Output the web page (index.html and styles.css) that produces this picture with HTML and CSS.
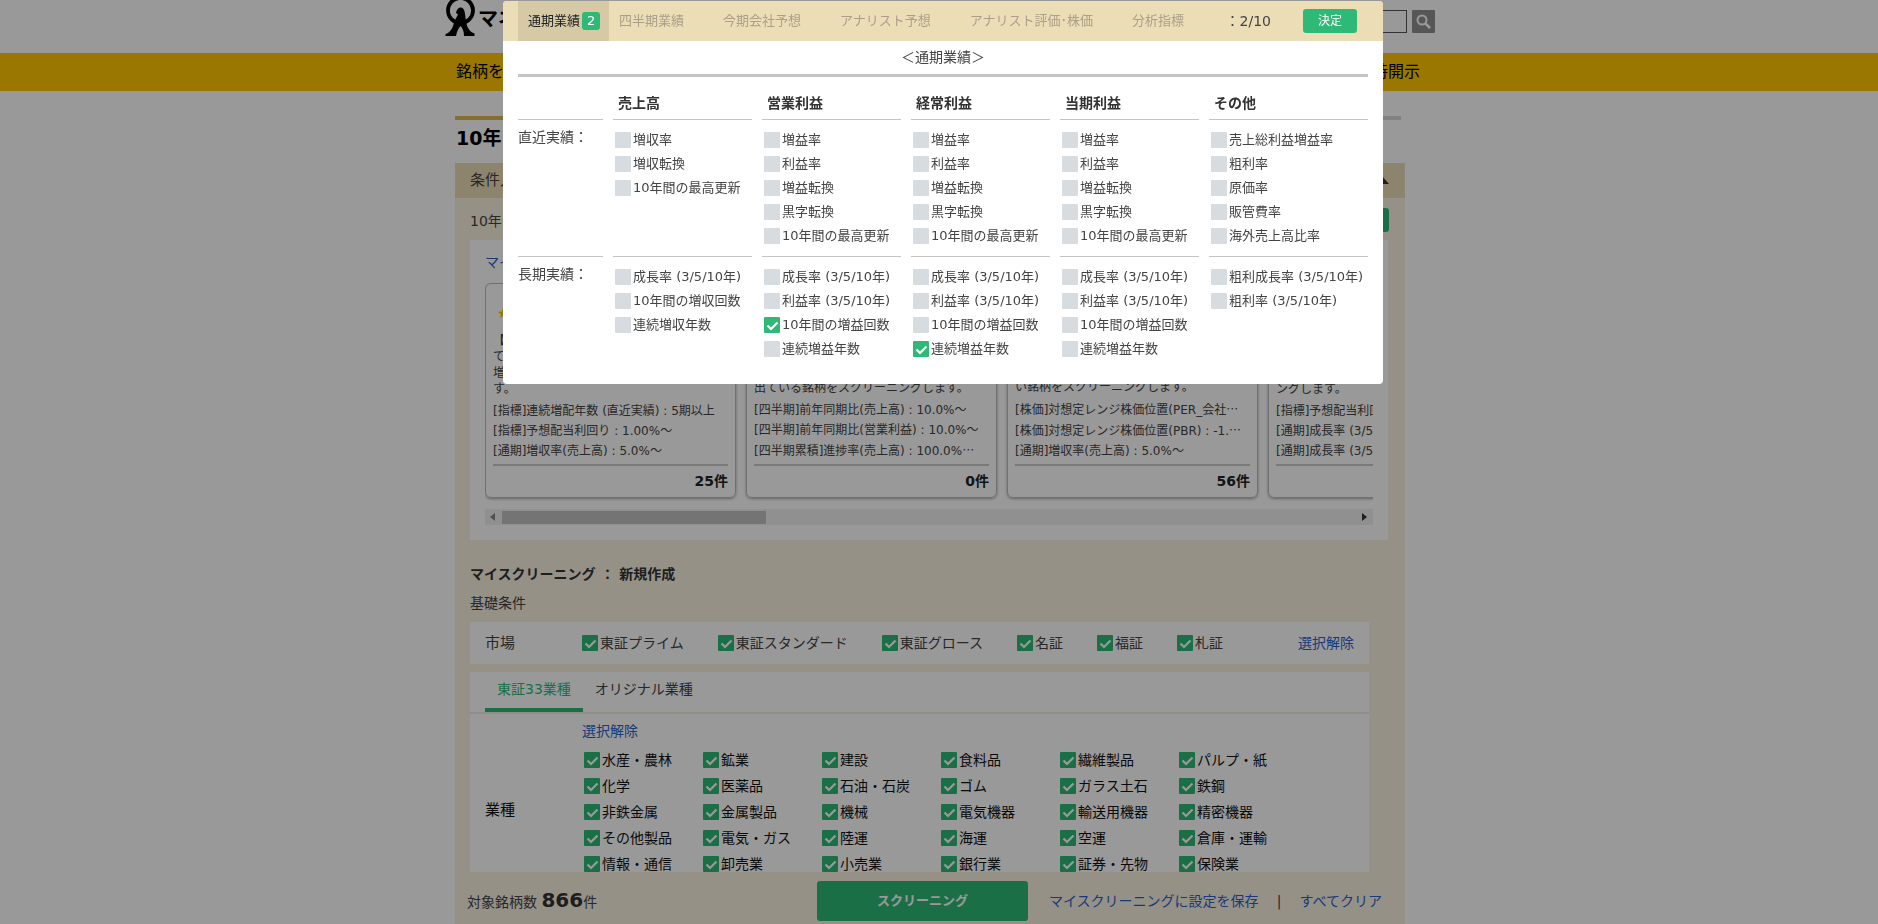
FILE: index.html
```html
<!DOCTYPE html>
<html lang="ja">
<head>
<meta charset="utf-8">
<title>10年スクリーニング</title>
<link rel="stylesheet" href="styles.css">
</head>
<body>
<div class="page">
  <header class="site-header">
    <div class="site-header-inner">
      <a class="logo" href="#">
        <svg class="logo-mark" width="32" height="37" viewBox="0 0 32 37" aria-hidden="true">
          <circle cx="16.500" cy="10.500" r="12.500" fill="none" stroke="#000" stroke-width="3.800"/>
          <path d="M12 13C12.500 9 15 7 17.500 7.500C20 8.500 20.500 11 21 14L22 21C23 28 26 32 30.500 33.500V36H20C20 31 18.500 28 16.500 26C14.500 28 13 31 12 36H1.500V34C6 33 9 28 10.500 21L14 14.500C13.500 14 13 13.500 12 13Z" fill="#000"/>
        </svg>
        <span>マネ</span>
      </a>
      <form class="search">
        <input class="search-box" type="text" aria-label="検索">
        <button class="search-button" type="button" aria-label="検索する">
          <svg width="15" height="15" viewBox="0 0 15 15"><circle cx="6" cy="6" r="4.500" fill="none" stroke="#fff" stroke-width="2"/><path d="M9.500 9.500L14 14" stroke="#fff" stroke-width="2.500"/></svg>
        </button>
      </form>
    </div>
  </header>
  <nav class="site-nav">
    <div class="site-nav-inner"><a href="#">銘柄を</a><a href="#">適時開示</a></div>
  </nav>

  <main class="main">
    <h1 class="page-title">10年</h1>
    <div class="panel-head"><span>条件入力</span><i class="triangle"></i></div>
    <div class="panel">
      <div class="intro"><span>10年ス</span><button class="guide" type="button" aria-label="使い方"></button></div>

      <section class="presets">
        <a class="link preset-link" href="#">マイ</a>
        <div class="cards">
          <article class="card">
            <div class="star">★</div>
            <p class="desc"><b class="lead">【</b><br>て<br>増<br>す。</p>
            <ul class="terms"><li>[指標]連続増配年数 (直近実績) : 5期以上</li><li>[指標]予想配当利回り : 1.00%～</li><li>[通期]増収率(売上高) : 5.0%～</li></ul>
            <p class="count">25件</p>
          </article>
          <article class="card">
            <p class="desc">出ている銘柄をスクリーニングします。</p>
            <ul class="terms"><li>[四半期]前年同期比(売上高) : 10.0%～</li><li>[四半期]前年同期比(営業利益) : 10.0%～</li><li>[四半期累積]進捗率(売上高) : 100.0%<span class="dots">…</span></li></ul>
            <p class="count">0件</p>
          </article>
          <article class="card">
            <p class="desc">い銘柄をスクリーニングします。</p>
            <ul class="terms"><li>[株価]対想定レンジ株価位置(PER_会社<span class="dots">…</span></li><li>[株価]対想定レンジ株価位置(PBR) : -1.<span class="dots">…</span></li><li>[通期]増収率(売上高) : 5.0%～</li></ul>
            <p class="count">56件</p>
          </article>
          <article class="card">
            <p class="desc">ングします。</p>
            <ul class="terms"><li>[指標]予想配当利回</li><li>[通期]成長率 (3/5</li><li>[通期]成長率 (3/5</li></ul>
            <p class="count"></p>
          </article>
        </div>
        <div class="scrollbar"><i class="arrow arrow-left"></i><div class="track"><div class="thumb"></div></div><i class="arrow arrow-right"></i></div>
      </section>

      <h2 class="section-title">マイスクリーニング ： 新規作成</h2>
      <h3 class="section-sub">基礎条件</h3>

      <section class="market">
        <span class="market-name">市場</span>
        <div class="market-items">
          <label class="check"><input type="checkbox" checked>東証プライム</label>
          <label class="check"><input type="checkbox" checked>東証スタンダード</label>
          <label class="check"><input type="checkbox" checked>東証グロース</label>
          <label class="check"><input type="checkbox" checked>名証</label>
          <label class="check"><input type="checkbox" checked>福証</label>
          <label class="check"><input type="checkbox" checked>札証</label>
        </div>
        <a class="link" href="#">選択解除</a>
      </section>

      <section class="industry">
        <div class="industry-tabs"><button class="industry-tab on" type="button">東証33業種</button><button class="industry-tab" type="button">オリジナル業種</button></div>
        <div class="industry-body">
          <span class="industry-name">業種</span>
          <div class="industry-main">
            <a class="link" href="#">選択解除</a>
            <div class="industry-grid">
              <label class="check"><input type="checkbox" checked>水産・農林</label>
              <label class="check"><input type="checkbox" checked>鉱業</label>
              <label class="check"><input type="checkbox" checked>建設</label>
              <label class="check"><input type="checkbox" checked>食料品</label>
              <label class="check"><input type="checkbox" checked>繊維製品</label>
              <label class="check"><input type="checkbox" checked>パルプ・紙</label>
              <label class="check"><input type="checkbox" checked>化学</label>
              <label class="check"><input type="checkbox" checked>医薬品</label>
              <label class="check"><input type="checkbox" checked>石油・石炭</label>
              <label class="check"><input type="checkbox" checked>ゴム</label>
              <label class="check"><input type="checkbox" checked>ガラス土石</label>
              <label class="check"><input type="checkbox" checked>鉄鋼</label>
              <label class="check"><input type="checkbox" checked>非鉄金属</label>
              <label class="check"><input type="checkbox" checked>金属製品</label>
              <label class="check"><input type="checkbox" checked>機械</label>
              <label class="check"><input type="checkbox" checked>電気機器</label>
              <label class="check"><input type="checkbox" checked>輸送用機器</label>
              <label class="check"><input type="checkbox" checked>精密機器</label>
              <label class="check"><input type="checkbox" checked>その他製品</label>
              <label class="check"><input type="checkbox" checked>電気・ガス</label>
              <label class="check"><input type="checkbox" checked>陸運</label>
              <label class="check"><input type="checkbox" checked>海運</label>
              <label class="check"><input type="checkbox" checked>空運</label>
              <label class="check"><input type="checkbox" checked>倉庫・運輸</label>
              <label class="check"><input type="checkbox" checked>情報・通信</label>
              <label class="check"><input type="checkbox" checked>卸売業</label>
              <label class="check"><input type="checkbox" checked>小売業</label>
              <label class="check"><input type="checkbox" checked>銀行業</label>
              <label class="check"><input type="checkbox" checked>証券・先物</label>
              <label class="check"><input type="checkbox" checked>保険業</label>
            </div>
          </div>
        </div>
      </section>
    </div>
    <footer class="action-bar">
      <p class="hits">対象銘柄数 <b>866</b>件</p>
      <button class="run" type="button">スクリーニング</button>
      <div class="action-links"><a class="link" href="#">マイスクリーニングに設定を保存</a><span>|</span><a class="link" href="#">すべてクリア</a></div>
    </footer>
  </main>
</div>

<div class="overlay"></div>

<section class="modal" role="dialog" aria-label="通期業績">
  <div class="modal-head">
    <div class="modal-tabs">
      <button class="modal-tab on" type="button">通期業績<span class="badge">2</span></button>
      <button class="modal-tab" type="button">四半期業績</button>
      <button class="modal-tab" type="button">今期会社予想</button>
      <button class="modal-tab" type="button">アナリスト予想</button>
      <button class="modal-tab" type="button">アナリスト評価･株価</button>
      <button class="modal-tab" type="button">分析指標</button>
    </div>
    <span class="picked">：2/10</span>
    <button class="decide" type="button">決定</button>
  </div>
  <div class="modal-body">
    <h2 class="modal-title">＜通期業績＞</h2>
    <div class="matrix">
      <div class="cell-head"></div>
      <div class="cell-head">売上高</div>
      <div class="cell-head">営業利益</div>
      <div class="cell-head">経常利益</div>
      <div class="cell-head">当期利益</div>
      <div class="cell-head">その他</div>

      <div class="cell-name">直近実績：</div>
      <div class="cell"><label class="check"><input type="checkbox">増収率</label><label class="check"><input type="checkbox">増収転換</label><label class="check"><input type="checkbox">10年間の最高更新</label></div>
      <div class="cell"><label class="check"><input type="checkbox">増益率</label><label class="check"><input type="checkbox">利益率</label><label class="check"><input type="checkbox">増益転換</label><label class="check"><input type="checkbox">黒字転換</label><label class="check"><input type="checkbox">10年間の最高更新</label></div>
      <div class="cell"><label class="check"><input type="checkbox">増益率</label><label class="check"><input type="checkbox">利益率</label><label class="check"><input type="checkbox">増益転換</label><label class="check"><input type="checkbox">黒字転換</label><label class="check"><input type="checkbox">10年間の最高更新</label></div>
      <div class="cell"><label class="check"><input type="checkbox">増益率</label><label class="check"><input type="checkbox">利益率</label><label class="check"><input type="checkbox">増益転換</label><label class="check"><input type="checkbox">黒字転換</label><label class="check"><input type="checkbox">10年間の最高更新</label></div>
      <div class="cell"><label class="check"><input type="checkbox">売上総利益増益率</label><label class="check"><input type="checkbox">粗利率</label><label class="check"><input type="checkbox">原価率</label><label class="check"><input type="checkbox">販管費率</label><label class="check"><input type="checkbox">海外売上高比率</label></div>

      <div class="cell-name ruled">長期実績：</div>
      <div class="cell ruled"><label class="check"><input type="checkbox">成長率 (3/5/10年)</label><label class="check"><input type="checkbox">10年間の増収回数</label><label class="check"><input type="checkbox">連続増収年数</label></div>
      <div class="cell ruled"><label class="check"><input type="checkbox">成長率 (3/5/10年)</label><label class="check"><input type="checkbox">利益率 (3/5/10年)</label><label class="check"><input type="checkbox" checked>10年間の増益回数</label><label class="check"><input type="checkbox">連続増益年数</label></div>
      <div class="cell ruled"><label class="check"><input type="checkbox">成長率 (3/5/10年)</label><label class="check"><input type="checkbox">利益率 (3/5/10年)</label><label class="check"><input type="checkbox">10年間の増益回数</label><label class="check"><input type="checkbox" checked>連続増益年数</label></div>
      <div class="cell ruled"><label class="check"><input type="checkbox">成長率 (3/5/10年)</label><label class="check"><input type="checkbox">利益率 (3/5/10年)</label><label class="check"><input type="checkbox">10年間の増益回数</label><label class="check"><input type="checkbox">連続増益年数</label></div>
      <div class="cell ruled"><label class="check"><input type="checkbox">粗利成長率 (3/5/10年)</label><label class="check"><input type="checkbox">粗利率 (3/5/10年)</label></div>
    </div>
  </div>
</section>
</body>
</html>
```

FILE: styles.css
```css
* { box-sizing: border-box; }
body {
  margin: 0;
  background: #fff;
  color: #444;
  font: 14px/20px "DejaVu Sans", "Noto Sans CJK JP", sans-serif;
}
h1, h2, h3, p, ul { margin: 0; padding: 0; font-weight: normal; }
ul { list-style: none; }
button, input { font: inherit; color: inherit; border: 0; padding: 0; margin: 0; }
button { background: none; }
a { color: inherit; text-decoration: none; }
.link { color: #2a5fcb; }

.page { height: 100vh; overflow: hidden; display: flex; flex-direction: column; }

/* site header */
.site-header { flex: none; height: 53px; }
.site-header-inner { width: 990px; margin: 0 auto; display: flex; justify-content: space-between; align-items: flex-start; }
.logo { display: flex; gap: 2px; color: #000; font-size: 20px; line-height: 38px; font-weight: bold; }
.search { display: flex; gap: 5px; padding-top: 10px; margin-right: -1px; }
.search-box { width: 180px; height: 23px; border: 1px solid #555; background: #fff; }
.search-button { width: 23px; height: 23px; background: #8f8f8f; display: flex; align-items: center; justify-content: center; border-radius: 1px; }
.site-nav { flex: none; height: 38px; background: #ffc600; color: #000; font-size: 16px; line-height: 38px; }
.site-nav-inner { width: 990px; margin: 0 auto; padding: 0 14px 0 12px; display: flex; justify-content: space-between; }

/* main column */
.main { flex: 1; min-height: 0; width: 950px; margin: 25px 0 0 calc(50% - 484px); display: flex; flex-direction: column; }
.page-title {
  flex: none;
  height: 47px;
  width: 946px;
  border-top: 4px solid;
  border-image: linear-gradient(90deg, #dfb94a 50%, #d9d9d9 50%) 1;
  border-width: 4px 0 0;
  padding-left: 1px;
  color: #000;
  font-size: 19px;
  line-height: 36px;
  font-weight: bold;
}
.panel-head { flex: none; height: 35px; padding: 0 16px 2px 15px; background: #ebdcb8; display: flex; justify-content: space-between; align-items: center; font-size: 15px; }
.triangle { border: 7px solid transparent; border-top: 0; border-bottom: 8px solid #333; }
.panel { flex: 1; min-height: 0; overflow: hidden; padding: 0 36px 0 15px; background: #f9f2e2; }
.intro { height: 42px; padding-top: 4px; margin-right: -20px; display: flex; justify-content: space-between; align-items: center; }
.guide { width: 80px; height: 24px; margin-bottom: 2px; background: #2eba76; border-radius: 3px; color: #fff; font-size: 13px; }

.presets { height: 300px; margin-right: -19px; padding: 12px 15px 0; background: #fff; }
.preset-link { display: block; height: 31px; }
.cards { display: flex; gap: 10px; overflow: hidden; height: 226px; }
.card { flex: none; width: 251px; height: 215px; padding: 7px 7px 0; border: 1px solid #bbb; border-radius: 6px; box-shadow: 0 1px 3px rgba(0, 0, 0, .35); display: flex; flex-direction: column; justify-content: flex-end; font-size: 12px; line-height: 16px; color: #444; }
.star { padding-left: 4px; margin-bottom: 12px; color: #ffc600; font-size: 14px; }
.terms { margin-top: 4px; line-height: 20px; white-space: nowrap; }
.dots { font-family: "Noto Sans CJK JP", sans-serif; }
.count { height: 33px; margin-top: 3px; border-top: 2px solid #ccc; text-align: right; font-size: 14px; line-height: 30px; font-weight: bold; color: #222; }
.scrollbar { height: 16px; background: #f1f1f1; display: flex; align-items: center; justify-content: space-between; padding: 0 6px 0 5px; }
.track { flex: 1; margin: 0 7px; }
.thumb { width: 31%; height: 13px; background: #c1c1c1; }
.arrow { border: 4px solid transparent; }
.arrow-left { border-left: 0; border-right: 5px solid #888; }
.arrow-right { border-right: 0; border-left: 5px solid #333; }

.section-title { margin-top: 24px; font-size: 14px; font-weight: bold; color: #333; }
.section-sub { margin: 9px 0; font-size: 14px; }

/* checkbox with its text */
.check { display: flex; align-items: center; gap: 2px; white-space: nowrap; }
.check input {
  appearance: none;
  flex: none;
  width: 16px;
  height: 16px;
  border-radius: 1px;
  background: #d6dcdf;
}
.check input:checked {
  background: #2eba76 url("data:image/svg+xml,%3Csvg xmlns='http://www.w3.org/2000/svg' viewBox='0 0 16 16'%3E%3Cpath d='M3.500 8.500L7 12L13.500 5.500' fill='none' stroke='white' stroke-width='2.200'/%3E%3C/svg%3E");
}

.market { height: 42px; padding: 0 15px; background: #fff; display: flex; align-items: center; font-size: 14px; }
.market-name { width: 97px; font-size: 15px; }
.market-items { flex: 1; display: flex; gap: 34px; }

.industry { margin-top: 8px; background: #fff; }
.industry-tabs { display: flex; height: 42px; padding: 0 15px; border-bottom: 2px solid #f0ebe0; }
.industry-tab { height: 40px; padding: 0 12px 2px; border-bottom: 4px solid transparent; }
.industry-tab.on { color: #2eba76; border-bottom-color: #2eba76; }
.industry-body { display: flex; padding: 7px 15px; }
.industry-name { width: 97px; padding-top: 79px; font-size: 15px; color: #111; }
.industry-main { flex: 1; }
.industry-grid { display: grid; grid-template-columns: repeat(6, 119px); grid-auto-rows: 26px; padding-top: 6px; color: #111; }
.industry-grid .check { padding-left: 2px; }

.action-bar { flex: none; height: 52px; padding: 6px 23px 0 12px; background: #f9f2e2; display: flex; align-items: center; }
.hits { width: 350px; }
.hits b { font-size: 20px; color: #333; }
.run { width: 211px; height: 40px; background: #2eba76; border-radius: 3px; color: #fff; font-size: 13px; font-weight: bold; }
.action-links { flex: 1; display: flex; justify-content: space-between; padding-left: 21px; }

/* modal */
.overlay { position: fixed; inset: 0; background: rgba(0, 0, 0, .4); }
.modal { position: absolute; top: 1px; left: calc(50% - 436px); width: 880px; background: #fff; border-radius: 4px; overflow: hidden; }
.modal-head { height: 40px; padding: 0 26px 0 15px; background: #ebddb6; display: flex; align-items: center; }
.modal-tabs { flex: 1; display: flex; align-self: stretch; font-size: 13px; }
.modal-tab { padding: 0 29px 0 10px; color: #aaa088; white-space: nowrap; }
.modal-tab.on { padding-right: 9px; background: #d6c9a6; color: #222; display: flex; align-items: center; gap: 2px; }
.badge { width: 18px; height: 18px; border-radius: 3px; background: #2eba76; color: #fff; line-height: 18px; text-align: center; }
.picked { margin-right: 32px; }
.decide { width: 54px; height: 24px; border-radius: 3px; background: #2eba76; color: #fff; font-size: 12px; line-height: 24px; }
.modal-body { padding: 0 15px 15px; }
.modal-title { height: 36px; border-bottom: 3px solid #c4c4c4; text-align: center; font-size: 14px; line-height: 33px; }
.matrix { display: grid; grid-template-columns: 85px repeat(4, 139px) 1fr; column-gap: 10px; }
.cell-head { height: 43px; padding: 16px 5px 0; border-bottom: 1px solid #c4c4c4; font-weight: bold; color: #333; }
.cell-name { padding-top: 7px; }
.cell { padding: 8px 0 8px 2px; font-size: 13px; line-height: 24px; }
.cell .check { height: 24px; }
.ruled { border-top: 1px solid #c4c4c4; }
```
